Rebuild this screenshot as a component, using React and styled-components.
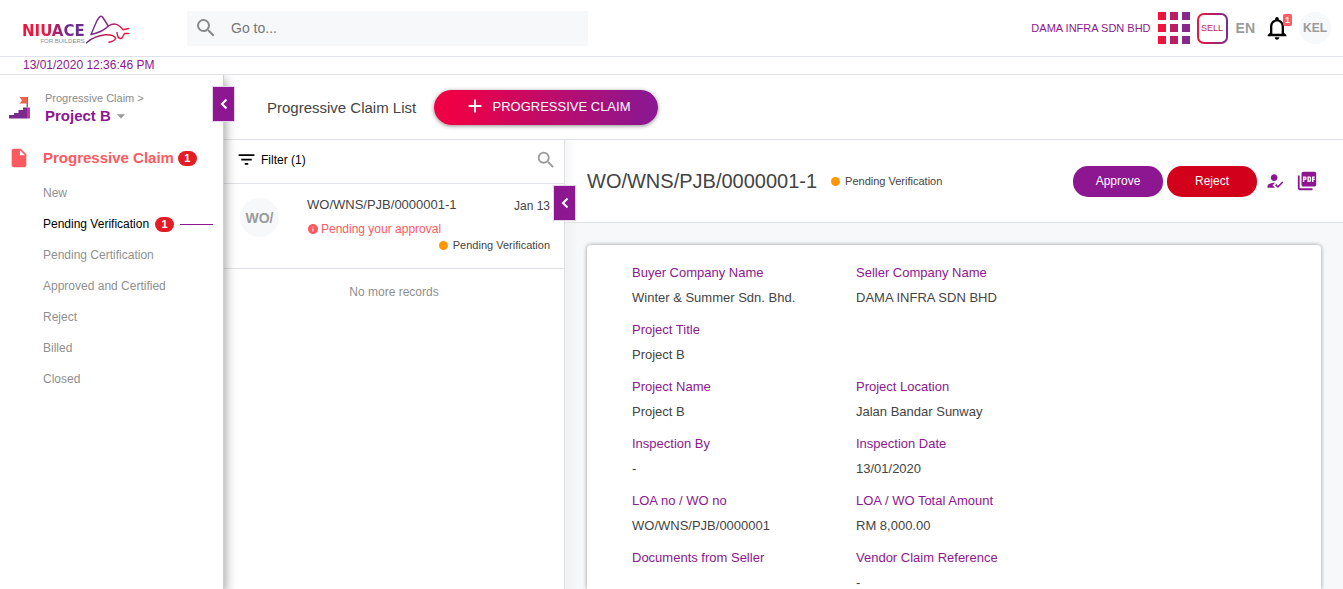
import React from 'react';
import styled, { createGlobalStyle } from 'styled-components';
import {
  MdSearch,
  MdFilterList,
  MdHowToReg,
  MdPictureAsPdf,
  MdInsertDriveFile,
  MdNotificationsNone,
  MdInfo,
  MdAdd,
  MdArrowDropDown,
} from 'react-icons/md';

const c = {
  purple: '#8c1790',
  red: '#d3001b',
  coral: '#ff5a60',
  badge: '#e51c23',
  line: '#dfe2e6',
  pale: '#f6f8fa',
  grey: '#9b9b9b',
  text: '#444444',
  orange: '#ff9800',
};

const GlobalStyle = createGlobalStyle`
  *, *::before, *::after { box-sizing: border-box; }
  body {
    margin: 0;
    font-family: "Liberation Sans", Arial, Helvetica, sans-serif;
    font-size: 13px;
    color: ${c.text};
    background: #fff;
  }
  button, input { font-family: inherit; }
  button { cursor: pointer; }
  a { color: inherit; text-decoration: none; }
  h1, h2, p, ul, dl, dd { margin: 0; padding: 0; }
  ul { list-style: none; }
  svg { display: block; flex: none; }
`;

const Shell = styled.div`
  display: flex;
  flex-direction: column;
  height: 100vh;
  overflow: hidden;
`;

/* Top bar */
const TopBar = styled.header`
  display: flex;
  align-items: center;
  flex: none;
  height: 57px;
  padding: 0 12px 0 22px;
  border-bottom: 1px solid ${c.line};
`;

const Brand = styled.a`
  display: flex;
  width: 165px;
  height: 32px;
`;

const BrandWords = styled.span`
  display: flex;
  flex-direction: column;
  align-items: flex-end;
  padding-top: 12px;
`;

const BrandName = styled.span`
  font: bold 15px/14px "DejaVu Sans", sans-serif;
  color: transparent;
  background: linear-gradient(90deg, #f0143c 35%, #6a2c8e 75%);
  background-clip: text;
`;

const BrandTag = styled.span`
  font-size: 6px;
  line-height: 6px;
  color: #8a8a8a;
`;

const SearchBox = styled.label`
  display: flex;
  align-items: center;
  gap: 13px;
  flex: 0 1 401px;
  height: 35px;
  padding: 0 7px;
  background: ${c.pale};
  color: #8a8a8a;
`;

const SearchInput = styled.input`
  flex: 1;
  min-width: 0;
  padding: 0;
  border: 0;
  outline: 0;
  background: transparent;
  font-size: 14px;
  color: ${c.text};
  &::placeholder { color: #757575; opacity: 1; }
`;

const Account = styled.div`
  display: flex;
  align-items: center;
  margin-left: auto;
`;

const CompanyName = styled.span`
  margin-right: 7px;
  font-size: 11px;
  color: ${c.purple};
`;

const PlainButton = styled.button`
  display: flex;
  align-items: center;
  padding: 0;
  border: 0;
  background: none;
  color: ${(p) => p.$color || 'inherit'};
`;

const SellButton = styled.button`
  width: 31px;
  height: 31px;
  margin: 0 8px 0 7px;
  padding: 0;
  border: 2px solid transparent;
  border-radius: 7px;
  background:
    linear-gradient(#fff, #fff) padding-box,
    linear-gradient(90deg, #f0143c, #7b2a8b) border-box;
  font-size: 9px;
  color: #c2185b;
`;

const Language = styled(PlainButton)`
  font-size: 14px;
  font-weight: bold;
`;

const Bell = styled(PlainButton)`
  position: relative;
  margin: 0 8px;
`;

const BellCount = styled.span`
  position: absolute;
  top: 0;
  right: -1px;
  width: 9px;
  font-size: 9px;
  line-height: 12px;
  font-weight: bold;
  text-align: center;
  border-radius: 2px;
  background: ${c.coral};
  color: #fff;
`;

const Avatar = styled.span`
  display: flex;
  align-items: center;
  justify-content: center;
  flex: none;
  width: ${(p) => p.$size}px;
  height: ${(p) => p.$size}px;
  border-radius: 50%;
  background: ${c.pale};
  font-size: ${(p) => p.$font}px;
  font-weight: bold;
  color: ${c.grey};
`;

const Clock = styled.time`
  flex: none;
  padding: 0 23px;
  border-bottom: 1px solid ${c.line};
  font-size: 12px;
  line-height: 17px;
  color: ${c.purple};
`;

/* Sidebar */
const Body = styled.div`
  display: flex;
  flex: 1;
  min-height: 0;
`;

const Sidebar = styled.aside`
  position: relative;
  z-index: 3;
  flex: none;
  width: 224px;
  border-right: 1px solid #d0d0d0;
  background: #fff;
  box-shadow: 2px 4px 10px rgba(0, 0, 0, 0.35);
  clip-path: inset(0 -16px 0 0);
`;

const CollapseButton = styled.button`
  position: absolute;
  top: ${(p) => p.$top}px;
  right: -12px;
  z-index: 2;
  display: flex;
  align-items: center;
  justify-content: center;
  width: 23px;
  height: 36px;
  padding: 0;
  border: 1px solid #e3d6e8;
  background: ${c.purple};
`;

const ProjectPicker = styled.div`
  display: flex;
  align-items: center;
  gap: 14px;
  padding: 15px 9px 0;
`;

const Breadcrumb = styled.a`
  display: block;
  font-size: 11px;
  line-height: 16px;
  color: #8a8a8a;
`;

const ProjectName = styled(PlainButton)`
  font-size: 15px;
  line-height: 20px;
  font-weight: bold;
`;

const NavHeading = styled.a`
  display: flex;
  align-items: center;
  margin-top: 21px;
  padding-left: 8px;
  font-size: 15px;
  line-height: 22px;
  font-weight: bold;
  white-space: nowrap;
  color: ${c.coral};
`;

const NavHeadingText = styled.span`
  margin: 0 4px 0 13px;
`;

const Count = styled.span`
  flex: none;
  width: 19px;
  border-radius: 8px;
  background: ${c.badge};
  font-size: 11px;
  line-height: 15px;
  font-weight: bold;
  text-align: center;
  color: #fff;
`;

const NavList = styled.ul`
  padding: 9px 10px 0 43px;
`;

const NavLink = styled.a`
  display: flex;
  align-items: center;
  gap: 6px;
  font-size: 12px;
  line-height: 31px;
  white-space: nowrap;
  color: ${(p) => (p.$active ? '#000' : '#8f8f8f')};
  ${(p) =>
    p.$active &&
    `&::after { content: ""; flex: 1; border-top: 1px solid ${c.purple}; }`}
`;

/* Claim list */
const Main = styled.main`
  display: flex;
  flex: 1;
  flex-direction: column;
  min-width: 0;
`;

const PageHead = styled.div`
  display: flex;
  align-items: center;
  flex: none;
  gap: 21px;
  height: 65px;
  padding-left: 43px;
  border-bottom: 1px solid ${c.line};
`;

const PageTitle = styled.h1`
  width: 146px;
  font-size: 15px;
  font-weight: normal;
  white-space: nowrap;
`;

const NewClaimButton = styled.button`
  display: flex;
  align-items: center;
  justify-content: center;
  gap: 7px;
  width: 224px;
  height: 35px;
  padding: 0 0 2px 2px;
  border: 0;
  border-radius: 18px;
  background: linear-gradient(90deg, #ee0046 10%, ${c.purple} 95%);
  box-shadow: 0 1px 4px rgba(0, 0, 0, 0.45);
  font-size: 13px;
  color: #fff;
`;

const Columns = styled.div`
  display: flex;
  flex: 1;
  min-height: 0;
`;

const ListPane = styled.section`
  position: relative;
  z-index: 1;
  flex: none;
  width: 341px;
  border-right: 1px solid ${c.line};
  background: #fff;
`;

const FilterBar = styled.div`
  display: flex;
  align-items: center;
  justify-content: space-between;
  height: 44px;
  padding: 0 7px 4px 12px;
  border-bottom: 1px solid ${c.line};
`;

const FilterButton = styled(PlainButton)`
  gap: 4px;
  font-size: 12px;
`;

const ClaimRow = styled.a`
  display: flex;
  height: 85px;
  padding: 14px 14px 0 16px;
  border-bottom: 1px solid ${c.line};
`;

const ClaimBody = styled.div`
  display: flex;
  flex: 1;
  flex-direction: column;
  margin-left: 28px;
`;

const ClaimTop = styled.div`
  display: flex;
  justify-content: space-between;
  line-height: 13px;
`;

const ClaimDate = styled.span`
  padding-top: 2px;
  font-size: 12px;
`;

const ClaimNote = styled.span`
  display: flex;
  align-items: center;
  gap: 2px;
  margin-top: 8px;
  font-size: 12px;
  line-height: 16px;
  color: ${c.coral};
`;

const Status = styled.span`
  display: flex;
  align-items: center;
  align-self: ${(p) => p.$align || 'auto'};
  gap: 5px;
  font-size: 11px;
  line-height: 16px;
  &::before {
    content: "";
    width: 9px;
    height: 9px;
    border-radius: 50%;
    background: ${c.orange};
  }
`;

const EndNote = styled.p`
  padding-top: 15px;
  font-size: 12px;
  line-height: 16px;
  text-align: center;
  color: #8f8f8f;
`;

/* Claim detail */
const Detail = styled.section`
  display: flex;
  flex: 1;
  flex-direction: column;
  min-width: 0;
  background: linear-gradient(90deg, #eef0f2, ${c.pale} 12px);
`;

const DetailHead = styled.div`
  display: flex;
  align-items: center;
  flex: none;
  height: 83px;
  padding: 0 25px 0 22px;
  border-bottom: 1px solid ${c.line};
  background: linear-gradient(90deg, #f6f6f6, #fff 12px);
`;

const DetailTitle = styled.h2`
  margin-right: 14px;
  font-size: 20px;
  font-weight: normal;
`;

const Actions = styled.div`
  display: flex;
  align-items: center;
  gap: 4px;
  margin-left: auto;
`;

const ActionButton = styled.button`
  width: 90px;
  height: 31px;
  padding: 0;
  border: 0;
  border-radius: 15px;
  background: ${(p) => p.$bg};
  font-size: 12px;
  color: #fff;
`;

const IconGroup = styled.div`
  display: flex;
  align-items: center;
  gap: 11px;
  margin-left: 4px;
`;

const Card = styled.div`
  flex: 1;
  margin: 22px 22px 0;
  padding: 15px 45px 0;
  overflow: hidden;
  border-radius: 4px 4px 0 0;
  background: #fff;
  box-shadow: 0 0 4px rgba(0, 0, 0, 0.4);
`;

const Fields = styled.dl`
  display: grid;
  grid-template-columns: 224px 1fr;
  row-gap: 7px;
  line-height: 25px;
`;

const Field = styled.div`
  grid-column: ${(p) => p.$col};
`;

const Label = styled.dt`
  color: ${c.purple};
`;

const navItems = [
  { label: 'New' },
  { label: 'Pending Verification', count: 1, active: true },
  { label: 'Pending Certification' },
  { label: 'Approved and Certified' },
  { label: 'Reject' },
  { label: 'Billed' },
  { label: 'Closed' },
];

const fields = [
  ['Buyer Company Name', 'Winter & Summer Sdn. Bhd.', 1],
  ['Seller Company Name', 'DAMA INFRA SDN BHD', 2],
  ['Project Title', 'Project B', 1],
  ['Project Name', 'Project B', 1],
  ['Project Location', 'Jalan Bandar Sunway', 2],
  ['Inspection By', '-', 1],
  ['Inspection Date', '13/01/2020', 2],
  ['LOA no / WO no', 'WO/WNS/PJB/0000001', 1],
  ['LOA / WO Total Amount', 'RM 8,000.00', 2],
  ['Documents from Seller', '', 1],
  ['Vendor Claim Reference', '-', 2],
];

const Bull = () => (
  <svg width="45" height="32" viewBox="0 0 45 32" fill="none" strokeWidth="1.4" strokeLinecap="round" strokeLinejoin="round">
    <defs>
      <linearGradient id="bull" x1="0" y1="0" x2="45" y2="0" gradientUnits="userSpaceOnUse">
        <stop offset="0" stopColor="#6a2c8e" />
        <stop offset=".5" stopColor="#8c2680" />
        <stop offset=".8" stopColor="#e0194a" />
        <stop offset="1" stopColor="#f0143c" />
      </linearGradient>
      <linearGradient id="tail" x1="0" y1="0" x2="31" y2="0" gradientUnits="userSpaceOnUse">
        <stop offset="0" stopColor="#6a2c8e" />
        <stop offset="1" stopColor="#f0143c" />
      </linearGradient>
    </defs>
    <g stroke="url(#bull)">
      <path d="M6 22.500 12 8.500 14.500 5Q16 3.500 17.500 5L23.300 14Q18 20 6 22.500" />
      <path d="M23.300 14Q30 9.800 35 14.500L38 17.800 43.500 16.500" />
      <path d="M43.500 21.500H39.500Q38 24.500 36.500 26.500 33.500 27 32.500 23.500L32 20.500" />
    </g>
    <path d="M1.500 30.700Q9 24 20.500 22.800 29 22.500 30.700 26.500 29.500 29 24 30.300" stroke="url(#tail)" />
  </svg>
);

const AppsGrid = () => (
  <svg width="32" height="32" viewBox="0 0 32 32">
    {['#f0143c', '#bb1e63', '#852a8b'].map((fill, x) =>
      [0, 12, 24].map((y) => <rect key={y} x={x * 12} y={y} width="8" height="8" fill={fill} />)
    )}
  </svg>
);

const Stairs = () => (
  <svg width="22" height="23" viewBox="0 1 22 23">
    <path d="M0 22.500V19H5V17H9.500V14H14V11.500H18V22.500Z" fill="#7b2a8b" />
    <path d="M18 11.500H21V22.500H18Z" fill="#c43a9a" />
    <path d="M17.500 1H19V11.500H17.500Z" fill="#777" />
    <path d="M10.500 1H18V7.500H10.500L13 4.500Z" fill="#f0624d" />
  </svg>
);

const Chevron = () => (
  <svg width="8" height="12" viewBox="0 0 8 12" fill="none" stroke="#fff" strokeWidth="2">
    <path d="M6.500 1.500 2 6 6.500 10.500" />
  </svg>
);

export default function App() {
  return (
    <Shell>
      <GlobalStyle />
      <TopBar>
        <Brand href="#home">
          <BrandWords>
            <BrandName>NIUACE</BrandName>
            <BrandTag>FOR BUILDERS</BrandTag>
          </BrandWords>
          <Bull />
        </Brand>
        <SearchBox>
          <MdSearch size={24} />
          <SearchInput type="text" placeholder="Go to..." aria-label="Go to" />
        </SearchBox>
        <Account>
          <CompanyName>DAMA INFRA SDN BHD</CompanyName>
          <PlainButton aria-label="Apps"><AppsGrid /></PlainButton>
          <SellButton>SELL</SellButton>
          <Language $color={c.grey}>EN</Language>
          <Bell $color="#000" aria-label="Notifications">
            <MdNotificationsNone size={28} />
            <BellCount>1</BellCount>
          </Bell>
          <Avatar $size={32} $font={12}>KEL</Avatar>
        </Account>
      </TopBar>
      <Clock>13/01/2020 12:36:46 PM</Clock>
      <Body>
        <Sidebar>
          <ProjectPicker>
            <Stairs />
            <div>
              <Breadcrumb href="#claims">Progressive Claim &gt;</Breadcrumb>
              <ProjectName $color={c.purple}>
                Project B
                <MdArrowDropDown size={20} color="#999" />
              </ProjectName>
            </div>
          </ProjectPicker>
          <CollapseButton $top={11} aria-label="Collapse menu"><Chevron /></CollapseButton>
          <nav>
            <NavHeading href="#progressive-claim">
              <MdInsertDriveFile size={22} />
              <NavHeadingText>Progressive Claim</NavHeadingText>
              <Count>1</Count>
            </NavHeading>
            <NavList>
              {navItems.map((item) => (
                <li key={item.label}>
                  <NavLink href="#status" $active={item.active}>
                    {item.label}
                    {item.count && <Count>{item.count}</Count>}
                  </NavLink>
                </li>
              ))}
            </NavList>
          </nav>
        </Sidebar>
        <Main>
          <PageHead>
            <PageTitle>Progressive Claim List</PageTitle>
            <NewClaimButton>
              <MdAdd size={22} />
              PROGRESSIVE CLAIM
            </NewClaimButton>
          </PageHead>
          <Columns>
            <ListPane>
              <FilterBar>
                <FilterButton $color="#000">
                  <MdFilterList size={21} />
                  Filter (1)
                </FilterButton>
                <PlainButton $color={c.grey} aria-label="Search claims">
                  <MdSearch size={22} />
                </PlainButton>
              </FilterBar>
              <CollapseButton $top={45} aria-label="Collapse list"><Chevron /></CollapseButton>
              <ClaimRow href="#claim">
                <Avatar $size={39} $font={14}>WO/</Avatar>
                <ClaimBody>
                  <ClaimTop>
                    <span>WO/WNS/PJB/0000001-1</span>
                    <ClaimDate>Jan 13</ClaimDate>
                  </ClaimTop>
                  <ClaimNote>
                    <MdInfo size={12} />
                    Pending your approval
                  </ClaimNote>
                  <Status $align="flex-end">Pending Verification</Status>
                </ClaimBody>
              </ClaimRow>
              <EndNote>No more records</EndNote>
            </ListPane>
            <Detail>
              <DetailHead>
                <DetailTitle>WO/WNS/PJB/0000001-1</DetailTitle>
                <Status>Pending Verification</Status>
                <Actions>
                  <ActionButton $bg={c.purple}>Approve</ActionButton>
                  <ActionButton $bg={c.red}>Reject</ActionButton>
                  <IconGroup>
                    <PlainButton $color={c.purple} aria-label="Assign approver">
                      <MdHowToReg size={20} />
                    </PlainButton>
                    <PlainButton $color={c.purple} aria-label="Download PDF">
                      <MdPictureAsPdf size={22} />
                    </PlainButton>
                  </IconGroup>
                </Actions>
              </DetailHead>
              <Card>
                <Fields>
                  {fields.map(([label, value, col]) => (
                    <Field key={label} $col={col}>
                      <Label>{label}</Label>
                      <dd>{value}</dd>
                    </Field>
                  ))}
                </Fields>
              </Card>
            </Detail>
          </Columns>
        </Main>
      </Body>
    </Shell>
  );
}
